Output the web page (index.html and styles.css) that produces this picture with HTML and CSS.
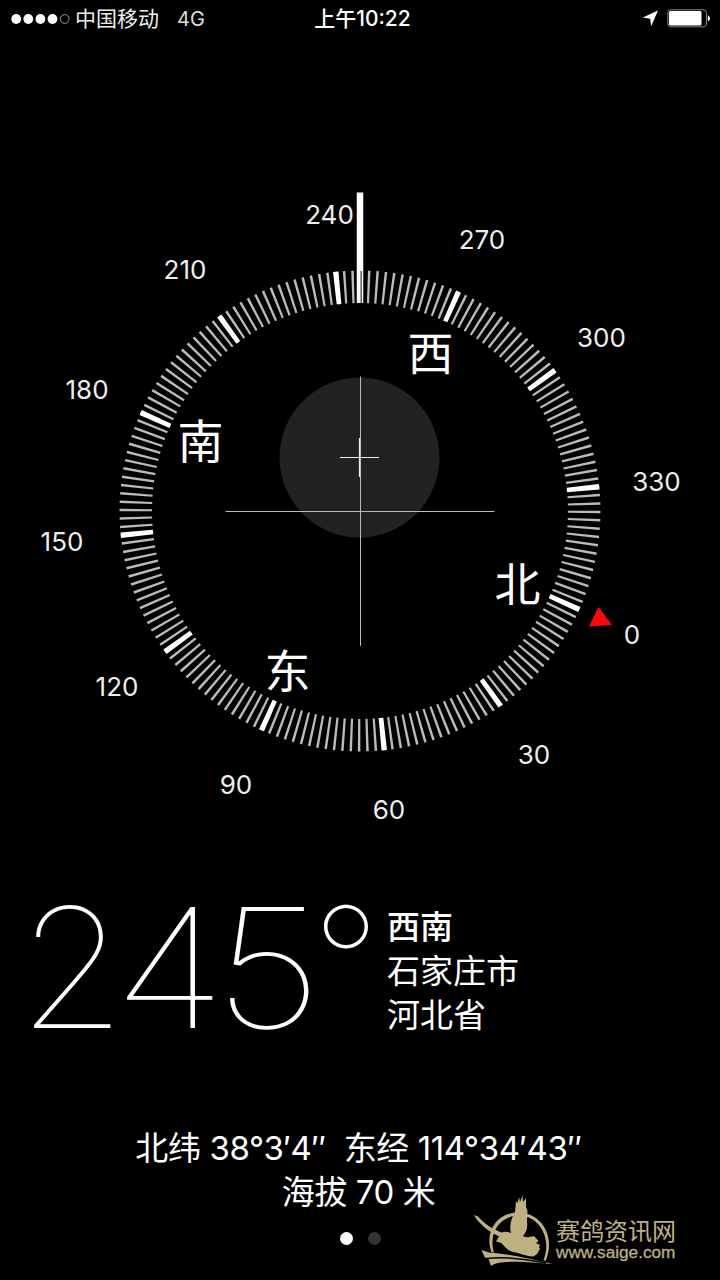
FILE: index.html
```
<!DOCTYPE html>
<html lang="zh-CN">
<head>
    <meta charset="UTF-8">
    <meta name="viewport" content="width=device-width, initial-scale=1.0">
    <title>指南针</title>
    <link rel="stylesheet" href="styles.css">
</head>
<body>
    <div class="screen">
        <header class="status-bar">
            <div class="status-left">
                <svg class="signal" width="60" height="12" viewBox="0 0 60 12">
                    <circle cx="5.2" cy="6" r="4.9"/>
                    <circle cx="17.3" cy="6" r="4.9"/>
                    <circle cx="29.4" cy="6" r="4.9"/>
                    <circle cx="41.5" cy="6" r="4.9"/>
                    <circle class="signal-empty" cx="53.7" cy="6" r="4.4"/>
                </svg>
                <span class="carrier">中国移动</span>
                <span class="network">4G</span>
            </div>
            <div class="status-time">上午10:22</div>
            <div class="status-right">
                <svg class="location" width="17" height="17" viewBox="0 0 17 17">
                    <path d="M16 0.5L0.8 7.6L8.2 8.8L9.2 16.3Z"/>
                </svg>
                <svg class="battery" width="44" height="19" viewBox="0 0 44 19">
                    <rect class="battery-body" x="0.8" y="0.8" width="38.6" height="17" rx="3"/>
                    <rect x="2" y="2" width="32.5" height="14.6" rx="1.5"/>
                    <path d="M40.8 6.2Q43 7 43 9.3T40.8 12.4Z"/>
                </svg>
            </div>
        </header>

        <main class="compass">
            <svg class="dial" width="720" height="660" viewBox="0 0 720 660">
                <circle class="level" cx="359.5" cy="277.5" r="80"/>
                <path class="cross" d="M360.5 196.5V466M225.5 331.5H494.5"/>
                <path class="level-cross" d="M359.5 258V297M340 277.5H379"/>

                <!-- pathLength=360, so one dash unit is one degree -->
                <g transform="rotate(-335.8 360 331)">
                    <circle class="ticks" cx="360" cy="331" r="224.2" pathLength="360"/>
                    <circle class="ticks-major" cx="360" cy="331" r="224.2" pathLength="360"/>
                </g>
                <path class="needle" d="M360 12.5V123"/>
                <path class="needle-gap" d="M361.2 91V123"/>
                <path class="north" d="M598.5 427L612 445L589 446.5Z"/>

                <g class="degrees">
                    <text x="329.5" y="44">240</text>
                    <text x="482" y="68.5">270</text>
                    <text x="601.5" y="166.5">300</text>
                    <text x="656.5" y="311">330</text>
                    <text x="632" y="464">0</text>
                    <text x="534" y="584">30</text>
                    <text x="389" y="638.5">60</text>
                    <text x="236" y="614">90</text>
                    <text x="117" y="516">120</text>
                    <text x="62" y="371">150</text>
                    <text x="87" y="218.5">180</text>
                    <text x="185" y="98.5">210</text>
                </g>
                <g class="directions">
                    <text x="430.5" y="190">西</text>
                    <text x="200.5" y="278">南</text>
                    <text x="517.5" y="421">北</text>
                    <text x="287.5" y="508">东</text>
                </g>
            </svg>
        </main>

        <section class="heading">
            <div class="heading-value">
                <span class="digit-2">2</span><span class="digit-4">4</span><span class="digit-5">5</span><span class="degree">°</span>
            </div>
            <div class="heading-place">
                <strong>西南</strong>
                <span>石家庄市</span>
                <span>河北省</span>
            </div>
        </section>

        <section class="position">
            <p class="coords"><span>北纬 38°3′4″</span><span>东经 114°34′43″</span></p>
            <p>海拔 70 米</p>
        </section>

        <nav class="pages">
            <span class="page active"></span>
            <span class="page"></span>
        </nav>

        <div class="watermark">
            <svg class="watermark-logo" width="82" height="74" viewBox="0 0 82 74">
                <path d="M17.5 57C10 37 23 17.5 44 17.5C68 17.5 82 42 71.5 66L69.5 65C78 44 66 21 45 20.5C26 20.5 14 38 20 57.5Z"/>
                <path d="M0 20L4 21.5C11 29 18 34 27.5 37.5C31 36 34 37 37 38C35 31 37 24 41 17L42 6L43.5 8L45 2L46 7L48.5 0.5L49 7L52 3L52 12L53.5 16L53 27C54 33 52 38 49 41C52 43 56 42 60 41L64.5 46L62 48L66 50L65 52.5L66 54L63 59L59.5 61.5C50 61 46 58 39 57C32 55 30 50 27 48L22 46.5L25 41.5C14 36 4 28 0 20Z"/>
                <path d="M7.5 55L15 57.5C34 59 54 63 79 69L50 67C34 66 22 67 17 71L14.5 64L10.5 62Z"/>
                <path class="watermark-gap" d="M13 63.5C32 61 52 64 72 68"/>
            </svg>
            <div class="watermark-text">
                <span class="watermark-name">赛鸽资讯网</span>
                <span class="watermark-url">www.saige.com</span>
            </div>
        </div>
    </div>
</body>
</html>
```
FILE: styles.css
```
* { margin: 0; padding: 0; box-sizing: border-box; }
body {
    background: #000;
    color: #fff;
    font-family: Inter, "Noto Sans CJK SC", sans-serif;
}
.screen {
    position: relative;
    width: 720px;
    height: 1280px;
    overflow: hidden;
    display: flex;
    flex-direction: column;
}
svg {
    display: block;
    fill: #fff;
}

/* status bar */
.status-bar {
    height: 36px;
    padding: 0 9px 0 11px;
    display: grid;
    grid-template-columns: 1fr auto 1fr;
    align-items: center;
    font-size: 20px;
    line-height: 36px;
}
.status-left, .status-right {
    display: flex;
    align-items: center;
}
.status-right {
    justify-content: flex-end;
    gap: 8px;
}
.signal-empty {
    fill: none;
    stroke: #999;
}
.carrier {
    margin: 1px 0 0 4px;
    font-size: 21px;
    color: #eee;
}
.network {
    margin: 1px 0 0 18px;
    color: #ddd;
}
.status-time {
    margin-left: 3px;
    font-size: 21px;
    font-weight: 500;
}
.battery-body {
    fill: none;
    stroke: #888;
}

/* compass dial */
.compass {
    margin-top: 144px;
}
.level {
    fill: #222;
}
.cross {
    stroke: #bbb;
    stroke-width: 1;
}
.level-cross {
    stroke: #eee;
    stroke-width: 1.2;
}
.ticks, .ticks-major {
    fill: none;
    stroke-width: 32.5;
}
.ticks {
    stroke: #bbb;
    stroke-dasharray: 0.6 1.4;
    stroke-dashoffset: 0.3;
}
.ticks-major {
    stroke: #fff;
    stroke-dasharray: 1.3 28.7;
    stroke-dashoffset: 0.65;
}
.needle {
    stroke: #fff;
    stroke-width: 6.5;
}
.needle-gap {
    stroke: #666;
    stroke-width: 1.6;
}
.north {
    fill: #f90a0a;
}
.degrees text {
    font-size: 26px;
    fill: #eee;
    text-anchor: middle;
}
.directions text {
    font-size: 46px;
    text-anchor: middle;
}

/* heading and place */
.heading {
    height: 150px;
    margin-top: 50px;
    padding-left: 26px;
    display: flex;
}
.heading-value {
    width: 361px;
    display: flex;
    font-size: 167px;
    font-weight: 100;
    line-height: 154px;
}
.digit-2 {
    margin-left: -6px;
    transform: scaleX(1.04);
}
.digit-4 {
    margin-left: -4px;
    transform: scaleX(1.14);
}
.digit-5 {
    margin-left: 2px;
    transform: scaleX(1.15);
}
.degree {
    margin-left: -7px;
    transform: scale(0.89);
    transform-origin: 50% 10%;
}
.heading-place {
    display: flex;
    flex-direction: column;
    padding-top: 15px;
    font-size: 33px;
    line-height: 44px;
}
.heading-place strong {
    font-weight: 500;
}

/* coordinates */
.position {
    margin: 86px 3px 0 0;
    font-size: 33px;
    line-height: 44px;
    letter-spacing: -0.4px;
    text-align: center;
}
.coords {
    display: flex;
    justify-content: center;
    gap: 18px;
}

.pages {
    display: flex;
    justify-content: center;
    gap: 15px;
    margin-top: 18px;
}
.page {
    width: 13px;
    height: 13px;
    border-radius: 50%;
    background: #333;
}
.page.active {
    background: #fff;
}

/* watermark lies over the page */
.watermark {
    position: absolute;
    left: 474px;
    top: 1195px;
    display: flex;
    color: #bdb183;
}
.watermark svg {
    fill: #bdb183;
}
.watermark-gap {
    fill: none;
    stroke: #000;
    stroke-width: 1.5;
}
.watermark-text {
    display: flex;
    flex-direction: column;
    padding-top: 25px;
}
.watermark-name {
    font-size: 24px;
    line-height: 24px;
}
.watermark-url {
    font-family: "Liberation Sans", sans-serif;
    font-size: 17.2px;
    line-height: 16px;
    -webkit-text-stroke: 0.3px #bdb183;
}
```
